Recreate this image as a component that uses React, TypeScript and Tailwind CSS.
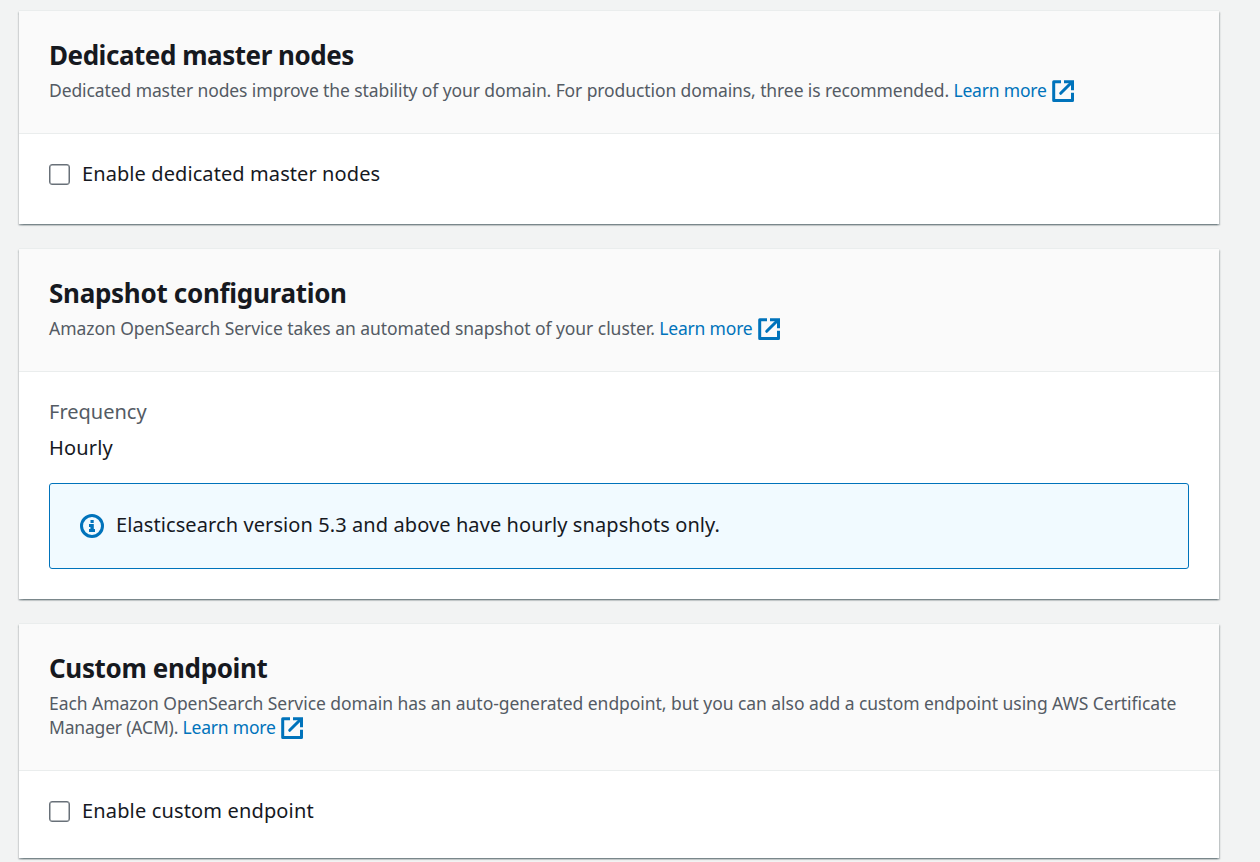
import type { ReactNode } from 'react';

function ExternalIcon() {
  return (
    <svg viewBox="0 0 24 24" className="ml-[4.5px] inline-block h-6 w-6 -my-1 align-[-2px]" fill="none" stroke="#0073bb" strokeWidth="3">
      <path d="M10 2.7H2.7v18.8h18.8v-7.7" strokeLinejoin="round" />
      <path d="M13 2.7h8.5v8.5" />
      <path d="M9.7 14.3L20.5 3.5" strokeLinecap="round" />
    </svg>
  );
}

function InfoIcon() {
  return (
    <svg viewBox="0 0 24 24" className="h-6 w-6 shrink-0" fill="none">
      <circle cx="12" cy="12" r="10.5" stroke="#0073bb" strokeWidth="3" />
      <path fill="#0073bb" d="M10.5 6h3.2v3h-3.2zM9 10h4.8v5H15v3H9v-3h1.4v-2H9z" />
    </svg>
  );
}

function LearnMore() {
  return (
    <a href="#" className="whitespace-nowrap text-[#0073bb]">
      <span className="tracking-[-0.2px]">Learn more</span>
      <ExternalIcon />
    </a>
  );
}

function Panel({ title, titleClass, description, headerClass, bodyClass, children }: {
  title: string;
  titleClass: string;
  description: ReactNode;
  headerClass: string;
  bodyClass: string;
  children: ReactNode;
}) {
  return (
    <section className="bg-white shadow-[0_1.5px_1.5px_0_rgba(0,28,36,0.3),1.5px_1.5px_1.5px_0_rgba(0,28,36,0.15),-1.5px_1.5px_1.5px_0_rgba(0,28,36,0.15)]">
      <header className={`border-t border-b border-[#eaeded] bg-[#fafafa] px-[30px] pt-[26px] ${headerClass}`}>
        <h2 className={`text-[26px] leading-9 font-bold ${titleClass}`}>{title}</h2>
        <div className="mt-[5px] text-[17.5px] leading-6 text-[#545b64]">{description}</div>
      </header>
      <div className={`px-[30px] ${bodyClass}`}>{children}</div>
    </section>
  );
}

function Checkbox({ label, className }: { label: string; className: string }) {
  return (
    <label className="flex items-center gap-3 text-[20px] leading-[30px]">
      <input type="checkbox" className="mt-px h-[21px] w-[21px] appearance-none rounded-[3px] border border-[#687078] bg-white shadow-[inset_0_0_0_0.5px_#687078]" />
      <span className={className}>{label}</span>
    </label>
  );
}

export default function App() {
  return (
    <main className="flex h-[862px] flex-col gap-6 overflow-hidden bg-[#f2f3f3] pt-[10px] pr-[41px] pl-[19px] font-['Noto_Sans',sans-serif] text-[#16191f]">
      <Panel
        title="Dedicated master nodes"
        titleClass="tracking-[-0.46px]"
        headerClass="h-[124px]"
        bodyClass="h-[90px] pt-[25px]"
        description={
          <>
            <span className="tracking-[-0.1px]">Dedicated master nodes improve the stability of your domain. For production domains, three is recommended. </span>
            <LearnMore />
          </>
        }
      >
        <Checkbox label="Enable dedicated master nodes" className="tracking-[0.09px]" />
      </Panel>

      <Panel
        title="Snapshot configuration"
        titleClass="tracking-[-0.29px]"
        headerClass="h-[124px]"
        bodyClass="h-[227px] pt-[25px]"
        description={
          <>
            <span className="tracking-[-0.05px]">Amazon OpenSearch Service takes an automated snapshot of your cluster. </span>
            <LearnMore />
          </>
        }
      >
        <dl className="text-[20px] leading-[30px]">
          <dt className="text-[#545b64]">Frequency</dt>
          <dd className="mt-1.5 tracking-[0.15px]">Hourly</dd>
        </dl>
        <div className="mt-5 flex h-[86px] items-center gap-3 rounded-[3px] border border-[#0073bb] bg-[#f1faff] px-[30px] text-[20px] leading-[30px]">
          <InfoIcon />
          <span className="pb-0.5 tracking-[0.09px]">Elasticsearch version 5.3 and above have hourly snapshots only.</span>
        </div>
      </Panel>

      <Panel
        title="Custom endpoint"
        titleClass="tracking-[-0.35px]"
        headerClass="h-[148px]"
        bodyClass="h-[87px] pt-[25px]"
        description={
          <>
            <span className="tracking-[-0.048px] whitespace-nowrap">Each Amazon OpenSearch Service domain has an auto-generated endpoint, but you can also add a custom endpoint using AWS Certificate</span>
            <br />
            <span className="tracking-[-0.18px]">Manager (ACM). </span>
            <LearnMore />
          </>
        }
      >
        <Checkbox label="Enable custom endpoint" className="tracking-[0.15px]" />
      </Panel>
    </main>
  );
}
